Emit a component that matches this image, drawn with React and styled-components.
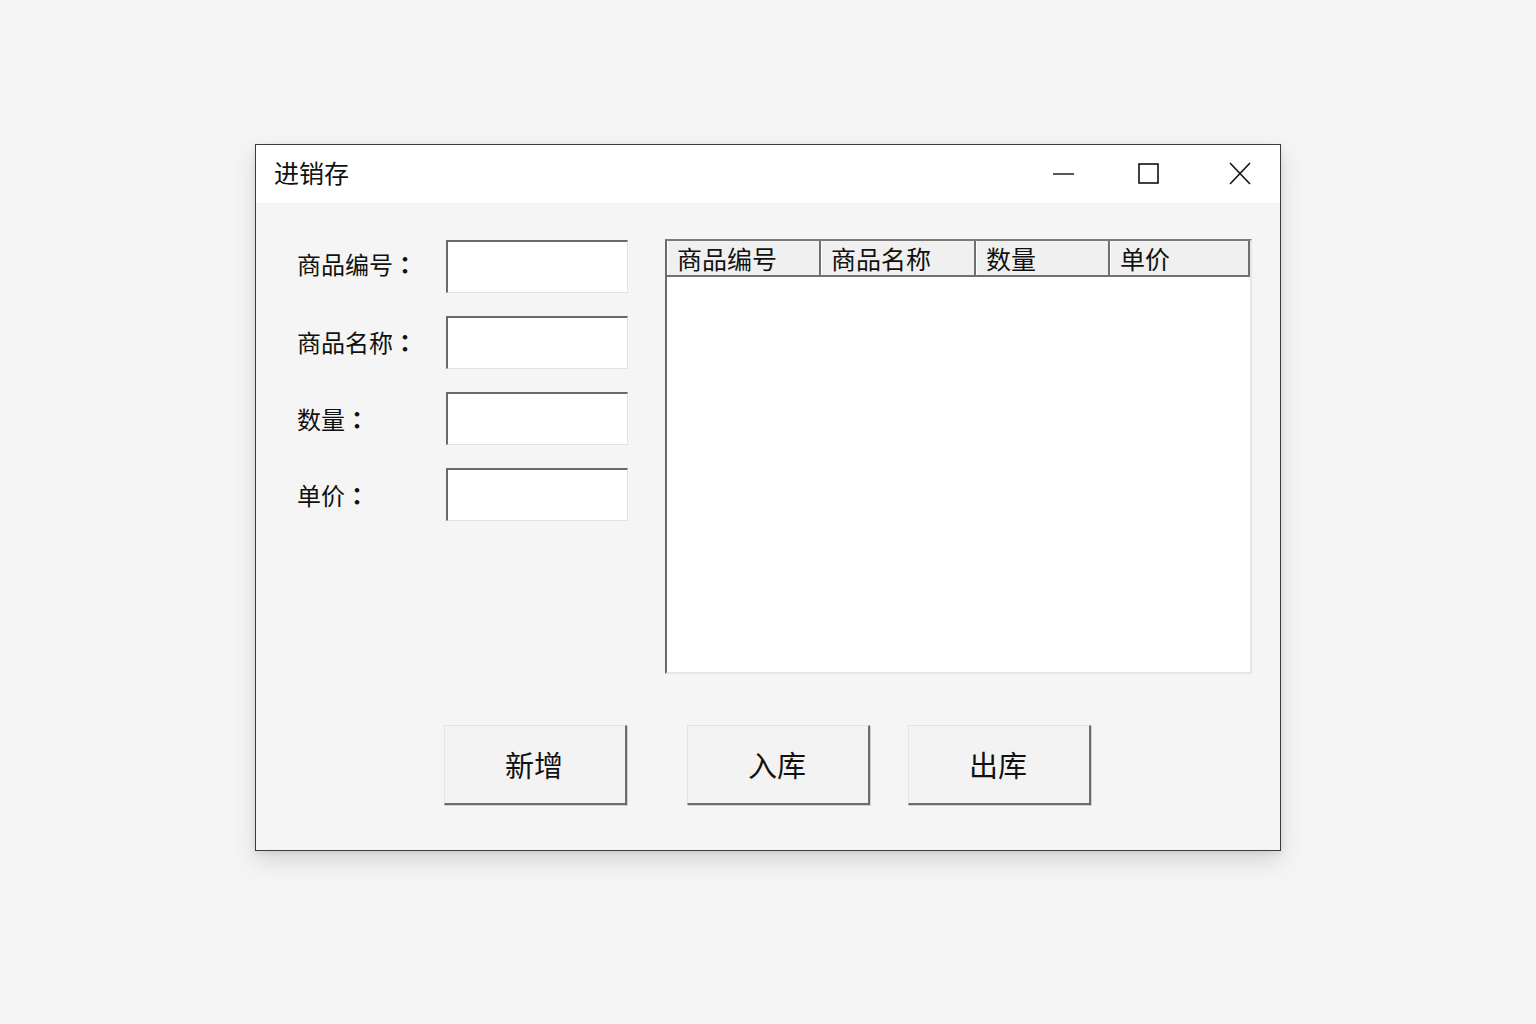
import React from "react";
import styled, { createGlobalStyle } from "styled-components";

const Global = createGlobalStyle`
  html, body { margin: 0; padding: 0; background: #f5f5f5; }
  body { font-family: "Noto Sans CJK SC", "Noto Sans", sans-serif; color: #111; }
  * { box-sizing: border-box; }
`;

const Page = styled.div`
  width: 1536px;
  height: 1024px;
  padding-top: 144px;
  display: flex;
  justify-content: center;
  align-items: flex-start;
  background: #f5f5f5;
`;

const Window = styled.div`
  width: 1026px;
  border: 1px solid #3a3a3a;
  background: #f5f5f5;
  box-shadow: 0 10px 22px rgba(0, 0, 0, 0.13), 0 2px 6px rgba(0, 0, 0, 0.08);
  display: flex;
  flex-direction: column;
`;

const TitleBar = styled.div`
  height: 58px;
  background: #ffffff;
  display: flex;
  align-items: center;
  padding-left: 18px;
  padding-right: 17px;
`;

const Title = styled.div`
  font-size: 25px;
  line-height: 1;
  flex: 1;
  margin-top: -3px;
`;

const Controls = styled.div`
  display: flex;
  align-items: center;
`;

const ControlBtn = styled.div`
  width: 46px;
  height: 40px;
  margin-left: ${(p) => p.$ml || 0}px;
  display: flex;
  align-items: center;
  justify-content: center;
`;

const Body = styled.div`
  padding: 36px 28px 45px 41px;
  display: flex;
  flex-direction: column;
`;

const TopArea = styled.div`
  display: flex;
  align-items: flex-start;
`;

const Form = styled.div`
  width: 368px;
  padding-top: 1px;
  display: flex;
  flex-direction: column;
  gap: 23px;
`;

const Row = styled.div`
  display: flex;
  align-items: center;
`;

const Label = styled.div`
  width: 149px;
  font-size: 24px;
  line-height: 1;
  margin-top: ${(p) => p.$dy || 0}px;
`;

const Colon = styled.span`
  font-family: "Noto Sans CJK JP", "Noto Sans CJK SC", sans-serif;
  font-weight: 700;
`;

const Input = styled.div`
  width: 182px;
  height: 53px;
  background: #ffffff;
  border-top: 2px solid #6a6a6a;
  border-left: 2px solid #6a6a6a;
  border-right: 1px solid #e2e2e2;
  border-bottom: 1px solid #e2e2e2;
`;

const Table = styled.div`
  width: 587px;
  height: 435px;
  background: #ffffff;
  border-top: 2px solid #7a7a7a;
  border-left: 2px solid #6a6a6a;
  border-right: 2px solid #e6e6e6;
  border-bottom: 2px solid #e6e6e6;
  display: flex;
  flex-direction: column;
`;

const HeaderRow = styled.div`
  display: flex;
  height: 36px;
  background: #f0f0f0;
  border-bottom: 2px solid #707070;
`;

const HeaderCell = styled.div`
  width: ${(p) => p.$w}px;
  border-left: 1px solid #ffffff;
  border-right: 2px solid #707070;
  font-size: 25px;
  line-height: 34px;
  padding-left: 9px;
  white-space: nowrap;
  overflow: hidden;
`;

const Buttons = styled.div`
  display: flex;
  margin-top: 51px;
  padding-left: 147px;
`;

const Button = styled.div`
  width: 183px;
  height: 80px;
  margin-left: ${(p) => p.$ml || 0}px;
  background: #f3f3f3;
  border-top: 1px solid #e4e4e4;
  border-left: 1px solid #e4e4e4;
  border-right: 2px solid #6c6c6c;
  border-bottom: 2px solid #6c6c6c;
  box-shadow: 1px 1px 0 #cfcfcf;
  display: flex;
  align-items: center;
  justify-content: center;
  font-size: 29px;
  line-height: 1;
  color: #111;
  padding-right: 2px;
`;

export default function App() {
  return (
    <>
      <Global />
      <Page>
        <Window>
          <TitleBar>
            <Title>进销存</Title>
            <Controls>
              <ControlBtn>
                <svg width="22" height="22" viewBox="0 0 22 22">
                  <line x1="0" y1="11" x2="21" y2="11" stroke="#111" strokeWidth="1.4" />
                </svg>
              </ControlBtn>
              <ControlBtn $ml={39}>
                <svg width="22" height="22" viewBox="0 0 22 22">
                  <rect x="1" y="1" width="19" height="19" fill="none" stroke="#111" strokeWidth="1.6" />
                </svg>
              </ControlBtn>
              <ControlBtn $ml={45}>
                <svg width="22" height="24" viewBox="0 0 22 24">
                  <line x1="1" y1="1" x2="21" y2="22" stroke="#111" strokeWidth="1.6" />
                  <line x1="21" y1="1" x2="1" y2="22" stroke="#111" strokeWidth="1.6" />
                </svg>
              </ControlBtn>
            </Controls>
          </TitleBar>
          <Body>
            <TopArea>
              <Form>
                <Row>
                  <Label $dy={-5}>商品编号<Colon>：</Colon></Label>
                  <Input />
                </Row>
                <Row>
                  <Label $dy={-2}>商品名称<Colon>：</Colon></Label>
                  <Input />
                </Row>
                <Row>
                  <Label>数量<Colon>：</Colon></Label>
                  <Input />
                </Row>
                <Row>
                  <Label>单价<Colon>：</Colon></Label>
                  <Input />
                </Row>
              </Form>
              <Table>
                <HeaderRow>
                  <HeaderCell $w={154}>商品编号</HeaderCell>
                  <HeaderCell $w={155}>商品名称</HeaderCell>
                  <HeaderCell $w={134}>数量</HeaderCell>
                  <HeaderCell $w={140}>单价</HeaderCell>
                </HeaderRow>
              </Table>
            </TopArea>
            <Buttons>
              <Button>新增</Button>
              <Button $ml={60}>入库</Button>
              <Button $ml={38}>出库</Button>
            </Buttons>
          </Body>
        </Window>
      </Page>
    </>
  );
}
